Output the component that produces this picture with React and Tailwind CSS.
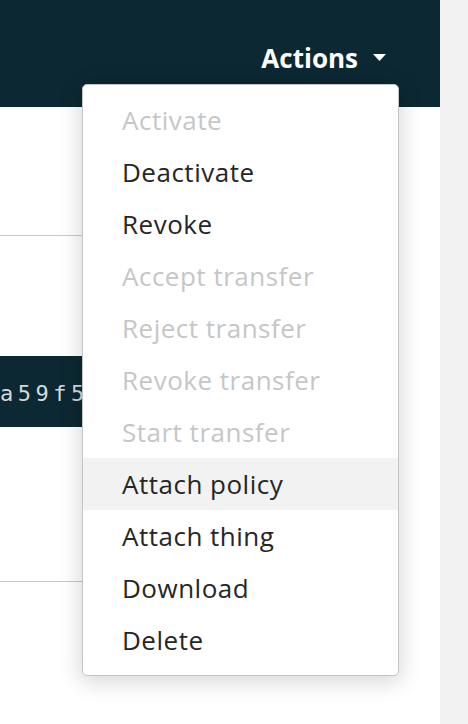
import React from 'react';

const items = [
  { label: 'Activate', disabled: true },
  { label: 'Deactivate' },
  { label: 'Revoke' },
  { label: 'Accept transfer', disabled: true },
  { label: 'Reject transfer', disabled: true },
  { label: 'Revoke transfer', disabled: true },
  { label: 'Start transfer', disabled: true },
  { label: 'Attach policy', active: true },
  { label: 'Attach thing' },
  { label: 'Download' },
  { label: 'Delete' },
];

function ActionsMenu() {
  return (
    <div className="absolute left-[82px] top-[84px] w-[317px] py-[9px] bg-white border border-[#c4c4c4] rounded-[5px] shadow-[0_4px_22px_2px_rgba(0,0,0,0.16)]">
      {items.map((item) => (
        <div
          key={item.label}
          className={`h-[52px] flex items-center pl-[39px] text-[26px] tracking-[0.5px] ${
            item.disabled ? 'text-[#c6c6c6]' : 'text-[#262626]'
          } ${item.active ? 'bg-[#f2f2f2]' : ''}`}
        >
          {item.label}
        </div>
      ))}
    </div>
  );
}

export default function App() {
  return (
    <div className="flex w-[468px] h-[724px] overflow-hidden font-['Open_Sans',sans-serif]">
      <div className="relative w-[440px] bg-white">
        <header className="h-[107px] bg-[#0c2832] flex justify-end pr-[54px] pt-[45px]">
          <button className="flex items-start gap-[15px] text-white font-bold text-[26px] leading-[26px]">
            Actions
            <svg width="13" height="7" viewBox="0 0 13 7" className="mt-[9px]">
              <path d="M0 0h13L6.5 7z" fill="#ffffff" />
            </svg>
          </button>
        </header>

        <div className="h-[128px]" />
        <div className="h-px w-[120px] bg-[#c8c8c8]" />
        <div className="h-[120px]" />
        <div className="h-[71px] w-[120px] bg-[#0c2832] flex items-center">
          <span className="mt-[4px] font-['DejaVu_Sans_Mono',monospace] text-[22px] tracking-[4.5px] text-[#d5d9d9]">
            a59f5
          </span>
        </div>
        <div className="h-[154px]" />
        <div className="h-px w-[120px] bg-[#c8c8c8]" />

        <ActionsMenu />
      </div>
      <div className="flex-1 bg-[#f2f2f2]" />
    </div>
  );
}
